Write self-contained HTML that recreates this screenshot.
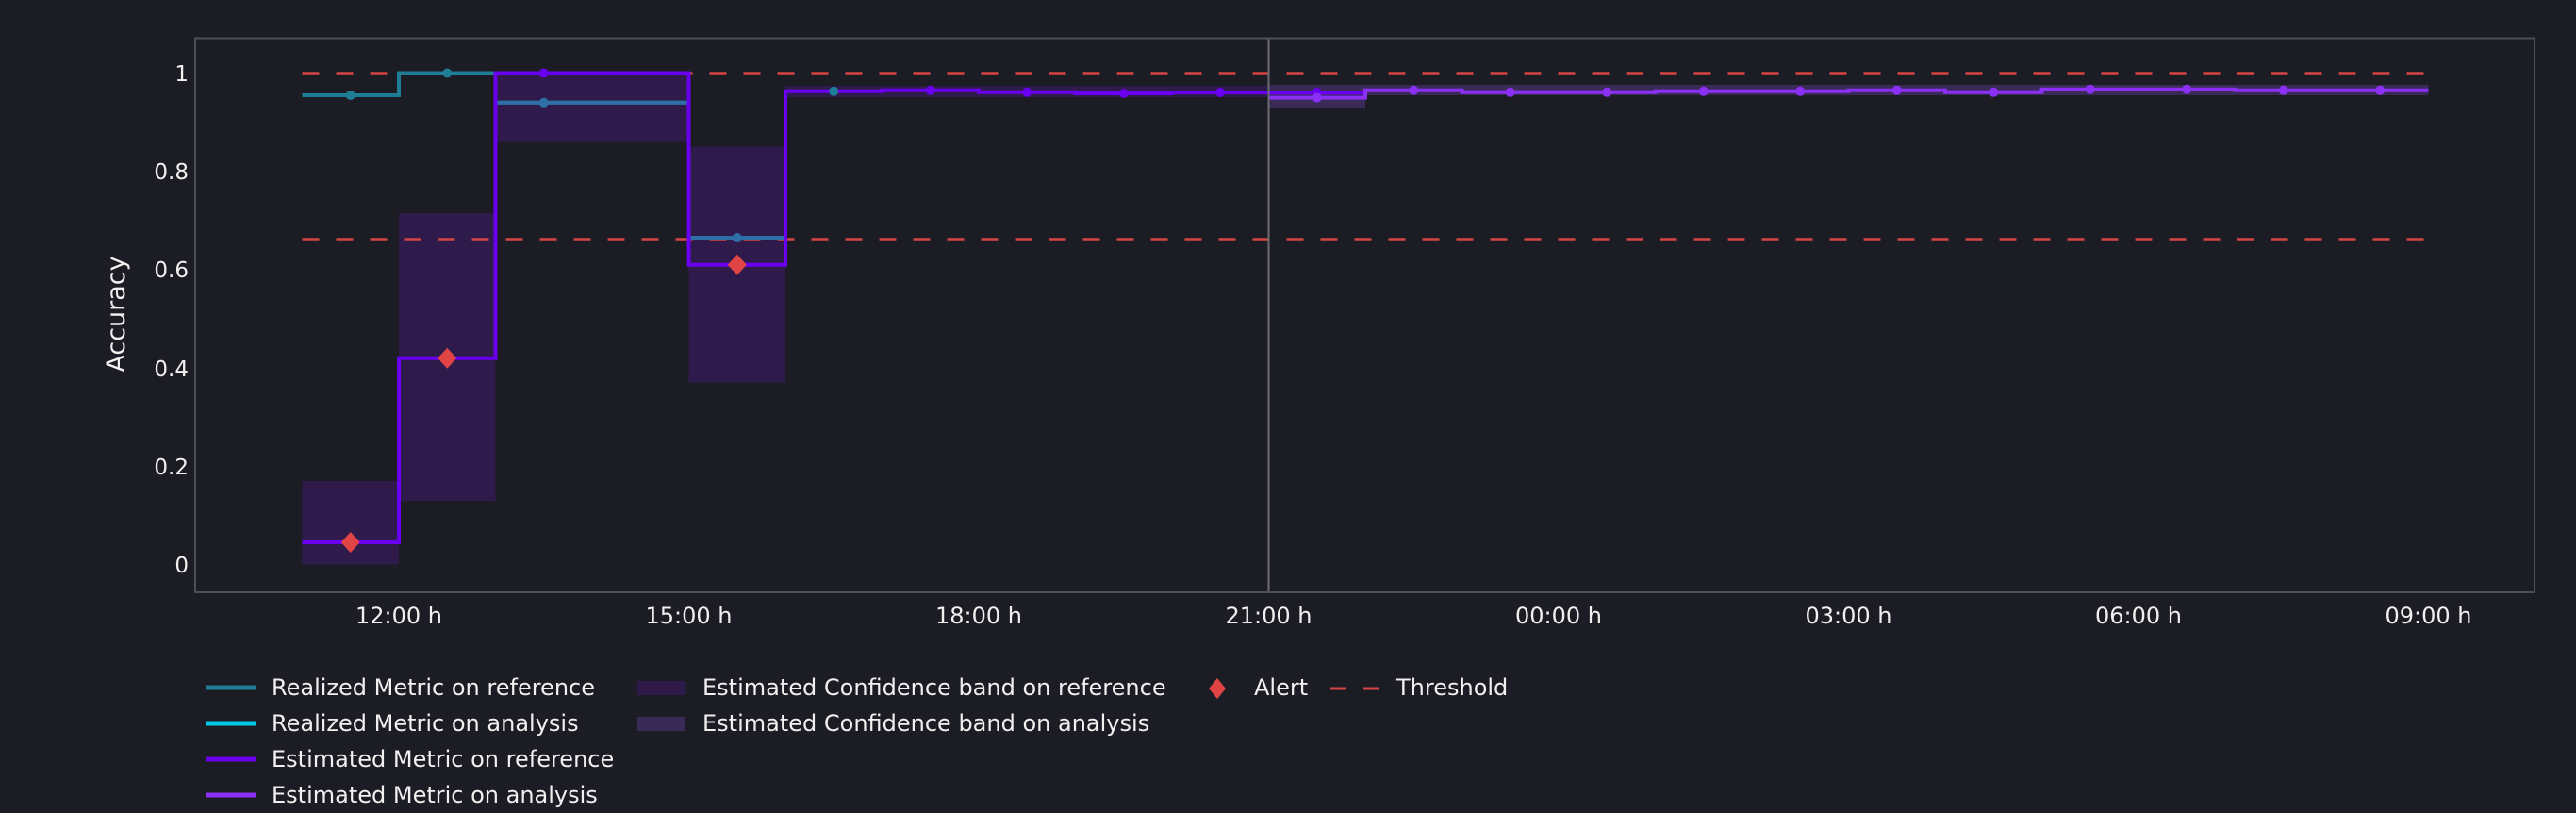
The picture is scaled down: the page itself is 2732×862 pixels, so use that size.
<!DOCTYPE html>
<html><head><meta charset="utf-8"><style>
html,body{margin:0;padding:0;background:#1c1c24;}
svg{display:block}
text{font-family:"DejaVu Sans","Liberation Sans",sans-serif;fill:#f0f0f0}
</style></head><body>
<svg width="2732" height="862" viewBox="0 0 2732 862" xmlns="http://www.w3.org/2000/svg">
<rect width="2732" height="862" fill="#1c1c24"/>
<g fill="#2e1b4b">
<rect x="320.5" y="510" width="102.5" height="88.5"/>
<rect x="423" y="226" width="102.5" height="305"/>
<rect x="525.5" y="77.5" width="205" height="73"/>
<rect x="730.5" y="155.6" width="102.5" height="250"/>
<rect x="833" y="91" width="512.5" height="12"/>
</g>
<g fill="#392a57">
<rect x="1345.5" y="90" width="102.5" height="25"/>
<rect x="1448" y="90" width="1127.5" height="11"/>
</g>
<g stroke="#d64545" stroke-width="2.5" stroke-dasharray="18,18" fill="none">
<line x1="320.5" y1="77.5" x2="2575.5" y2="77.5"/>
<line x1="320.5" y1="253.5" x2="2575.5" y2="253.5"/>
</g>
<path d="M320.5,101 H423 V77.5 H525.5 M525.5,108.8 H730.5 M730.5,252 H833" stroke="#1f7d96" stroke-width="4" fill="none"/>
<path d="M525.5,108.8 H730.5 M730.5,252 H833" stroke="#2f6fa8" stroke-width="4" fill="none"/>
<path d="M320.5,575 H423 V379.7 H525.5 V77.5 H730.5 V280.7 H833 V96.8 H935.5 V95.8 H1038 V97.8 H1140.5 V99 H1243 V98 H1345.5 V98.5 H1448" stroke="#6a00f0" stroke-width="4" fill="none"/>
<path d="M1345.5,103.6 H1448 V95.8 H1550.5 V97.8 H1653 V97.8 H1755.5 V96.8 H1858 V96.8 H1960.5 V95.8 H2063 V97.8 H2165.5 V94.7 H2268 V94.7 H2370.5 V95.8 H2473 V95.8 H2575.5" stroke="#8c30f5" stroke-width="4" fill="none"/>
<g fill="#1f7d96">
<circle cx="371.75" cy="101" r="5"/><circle cx="474.25" cy="77.5" r="5"/>
<circle cx="781.75" cy="252" r="5" fill="#2f6fa8"/><circle cx="576.75" cy="108.8" r="5" fill="#2f6fa8"/>
<circle cx="884.25" cy="96.8" r="5"/>
</g>
<g fill="#6a00f0">
<circle cx="576.75" cy="77.5" r="5"/>
<circle cx="986.75" cy="95.8" r="5"/><circle cx="1089.25" cy="97.8" r="5"/><circle cx="1191.75" cy="99" r="5"/><circle cx="1294.25" cy="98" r="5"/><circle cx="1396.75" cy="98" r="5"/>
</g>
<g fill="#8c30f5">
<circle cx="1396.75" cy="103.6" r="5"/><circle cx="1499.25" cy="95.8" r="5"/><circle cx="1601.75" cy="97.8" r="5"/><circle cx="1704.25" cy="97.8" r="5"/><circle cx="1806.75" cy="96.8" r="5"/><circle cx="1909.25" cy="96.8" r="5"/><circle cx="2011.75" cy="95.8" r="5"/><circle cx="2114.25" cy="97.8" r="5"/><circle cx="2216.75" cy="94.7" r="5"/><circle cx="2319.25" cy="94.7" r="5"/><circle cx="2421.75" cy="95.8" r="5"/><circle cx="2524.25" cy="95.8" r="5"/>
</g>
<g fill="#e04444">
<path d="M371.75,564 l10,11 l-10,11 l-10,-11z"/>
<path d="M474.25,368.7 l10,11 l-10,11 l-10,-11z"/>
<path d="M781.75,269.7 l10,11 l-10,11 l-10,-11z"/>
</g>
<line x1="1345.5" y1="40" x2="1345.5" y2="628" stroke="#6b6b70" stroke-width="2"/>
<rect x="207" y="40.5" width="2481" height="587.5" fill="none" stroke="#4c4f5a" stroke-width="2"/>
<g font-size="23" text-anchor="end">
<text x="200" y="86">1</text>
<text x="200" y="190">0.8</text>
<text x="200" y="294">0.6</text>
<text x="200" y="399">0.4</text>
<text x="200" y="503">0.2</text>
<text x="200" y="607">0</text>
</g>
<text font-size="27" transform="translate(132,333) rotate(-90)" text-anchor="middle">Accuracy</text>
<g font-size="24" text-anchor="middle">
<text x="423" y="661">12:00 h</text>
<text x="730.5" y="661">15:00 h</text>
<text x="1038" y="661">18:00 h</text>
<text x="1345.5" y="661">21:00 h</text>
<text x="1653" y="661">00:00 h</text>
<text x="1960.5" y="661">03:00 h</text>
<text x="2268" y="661">06:00 h</text>
<text x="2575.5" y="661">09:00 h</text>
</g>
<g stroke-width="5">
<line x1="219" y1="729" x2="272" y2="729" stroke="#1f7d96"/>
<line x1="219" y1="767" x2="272" y2="767" stroke="#00c8e6"/>
<line x1="219" y1="805" x2="272" y2="805" stroke="#6a00f0"/>
<line x1="219" y1="843" x2="272" y2="843" stroke="#8c30f5"/>
</g>
<rect x="676" y="722" width="50" height="15" fill="#2e1b4b"/>
<rect x="676" y="760" width="50" height="15" fill="#392a57"/>
<path d="M1291,719 l9,11 l-9,11 l-9,-11z" fill="#e04444"/>
<g stroke="#d64545" stroke-width="3"><line x1="1411" y1="730" x2="1428" y2="730"/><line x1="1446" y1="730" x2="1463" y2="730"/></g>
<g font-size="24">
<text x="288" y="737">Realized Metric on reference</text>
<text x="288" y="775">Realized Metric on analysis</text>
<text x="288" y="813">Estimated Metric on reference</text>
<text x="288" y="851">Estimated Metric on analysis</text>
<text x="745" y="737">Estimated Confidence band on reference</text>
<text x="745" y="775">Estimated Confidence band on analysis</text>
<text x="1330" y="737">Alert</text>
<text x="1481" y="737">Threshold</text>
</g>
</svg>
</body></html>
